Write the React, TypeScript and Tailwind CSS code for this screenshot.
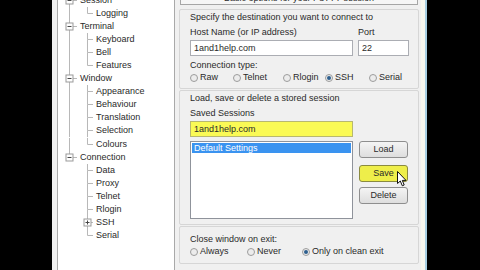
import React from "react";

type TreeRow = {
  label: string;
  level: 0 | 1;
  expander?: "-" | "+";
  rootTop?: boolean;
  rootBottom?: boolean;
  root?: boolean;
  childBottom?: boolean;
};

const TREE: TreeRow[] = [
  { label: "Session", level: 0, expander: "-", rootTop: true, rootBottom: true },
  { label: "Logging", level: 1, root: true },
  { label: "Terminal", level: 0, expander: "-", rootTop: true, rootBottom: true },
  { label: "Keyboard", level: 1, root: true, childBottom: true },
  { label: "Bell", level: 1, root: true, childBottom: true },
  { label: "Features", level: 1, root: true },
  { label: "Window", level: 0, expander: "-", rootTop: true, rootBottom: true },
  { label: "Appearance", level: 1, root: true, childBottom: true },
  { label: "Behaviour", level: 1, root: true, childBottom: true },
  { label: "Translation", level: 1, root: true, childBottom: true },
  { label: "Selection", level: 1, root: true, childBottom: true },
  { label: "Colours", level: 1, root: true },
  { label: "Connection", level: 0, expander: "-", rootTop: true },
  { label: "Data", level: 1, childBottom: true },
  { label: "Proxy", level: 1, childBottom: true },
  { label: "Telnet", level: 1, childBottom: true },
  { label: "Rlogin", level: 1, childBottom: true },
  { label: "SSH", level: 1, expander: "+", childBottom: true },
  { label: "Serial", level: 1 },
];

const LINE = "#b8b8b8";
const H = 13.1;
const MID = 6.5;

function ExpanderBox({ cx, sign }: { cx: number; sign: "-" | "+" }) {
  return (
    <g>
      <rect x={cx - 3.5} y={MID - 3.5} width="7" height="7" fill="#fff" stroke="#9a9a9a" strokeWidth="1" />
      <line x1={cx - 2} y1={MID} x2={cx + 2} y2={MID} stroke="#444" strokeWidth="1" />
      {sign === "+" && <line x1={cx} y1={MID - 2} x2={cx} y2={MID + 2} stroke="#444" strokeWidth="1" />}
    </g>
  );
}

function Connector({ row }: { row: TreeRow }) {
  const rx = 11.5;
  const cx = 29.5;
  if (row.level === 0) {
    return (
      <svg width="21" height={H} viewBox={`0 0 21 ${H}`} className="shrink-0">
        {row.rootTop && <line x1={rx} y1="0" x2={rx} y2={MID - 3.5} stroke={LINE} />}
        {row.rootBottom && <line x1={rx} y1={MID + 3.5} x2={rx} y2={H} stroke={LINE} />}
        <line x1={rx + 3.5} y1={MID} x2="19" y2={MID} stroke={LINE} />
        <ExpanderBox cx={rx} sign={row.expander ?? "-"} />
      </svg>
    );
  }
  return (
    <svg width="37" height={H} viewBox={`0 0 37 ${H}`} className="shrink-0">
      {row.root && <line x1={rx} y1="0" x2={rx} y2={H} stroke={LINE} />}
      <line x1={cx} y1="0" x2={cx} y2={row.expander ? MID - 3.5 : MID} stroke={LINE} />
      {row.childBottom && <line x1={cx} y1={row.expander ? MID + 3.5 : MID} x2={cx} y2={H} stroke={LINE} />}
      <line x1={row.expander ? cx + 3.5 : cx} y1={MID} x2="35" y2={MID} stroke={LINE} />
      {row.expander && <ExpanderBox cx={cx} sign={row.expander} />}
    </svg>
  );
}

function Radio({ checked }: { checked?: boolean }) {
  return (
    <span className="w-[8px] h-[8px] shrink-0 rounded-full border border-[#9c9c9c] bg-[#ececec] flex items-center justify-center">
      {checked && <span className="w-[4px] h-[4px] rounded-full bg-[#2d5f8e]" />}
    </span>
  );
}

function RadioItem({ label, checked, w }: { label: string; checked?: boolean; w?: string }) {
  return (
    <div className={`flex items-center gap-[2px] ${w ?? ""}`}>
      <Radio checked={checked} />
      <span>{label}</span>
    </div>
  );
}

function Button({ label, hot }: { label: string; hot?: boolean }) {
  return (
    <div
      className={`h-[17px] w-[49px] rounded-[3px] border flex items-center justify-center ${
        hot ? "border-[#8a8a40] bg-[#eeee4a]" : "border-[#8e8e8e] bg-gradient-to-b from-[#f4f4f4] to-[#dedede]"
      }`}
    >
      {label}
    </div>
  );
}

export default function App() {
  return (
    <div className="w-[480px] h-[270px] bg-black flex overflow-hidden font-['Liberation_Sans',Arial,sans-serif] text-[9px] leading-[11px] text-[#2a2a2a]">
      <div className="w-[52px] shrink-0" />

      {/* window body */}
      <div className="w-[369px] shrink-0 bg-[#f0f0f0] flex pl-[5px]">
        {/* category tree */}
        <div className="w-[118px] h-full shrink-0 bg-white border-x border-[#a9a9a9] overflow-hidden">
          <div className="-mt-[6.5px] flex flex-col">
            {TREE.map((row) => (
              <div key={row.label} className="h-[13.1px] flex items-center">
                <Connector row={row} />
                <span className="ml-[1px] whitespace-nowrap">{row.label}</span>
              </div>
            ))}
          </div>
        </div>

        {/* options panel */}
        <div className="w-[240px] shrink-0 ml-[4px] flex flex-col">
          <div className="-mt-[9px] h-[14px] mx-[1px] border border-[#a6a6a6] bg-[#f6f6f6] flex items-center justify-center">
            Basic options for your PuTTY session
          </div>

          {/* destination */}
          <div className="mt-[4px] border border-[#d6d6d6] rounded-[2px] pl-[10px] pb-[5px] flex flex-col">
            <div className="mt-[2px] h-[11px]">Specify the destination you want to connect to</div>
            <div className="mt-[4px] h-[11px] flex gap-[5px]">
              <span className="w-[163px]">Host Name (or IP address)</span>
              <span>Port</span>
            </div>
            <div className="mt-[2px] flex gap-[5px]">
              <div className="w-[163px] h-[16px] border border-[#abadb3] bg-white pl-[3px] flex items-center">
                1and1help.com
              </div>
              <div className="w-[51px] h-[16px] border border-[#abadb3] bg-white pl-[3px] flex items-center">22</div>
            </div>
            <div className="mt-[4px] h-[11px]">Connection type:</div>
            <div className="mt-[1px] h-[11px] flex items-center">
              <RadioItem label="Raw" w="w-[43px]" />
              <RadioItem label="Telnet" w="w-[50px]" />
              <RadioItem label="Rlogin" w="w-[42px]" />
              <RadioItem label="SSH" checked w="w-[44px]" />
              <RadioItem label="Serial" />
            </div>
          </div>

          {/* saved sessions */}
          <div className="mt-[1px] border border-[#d6d6d6] rounded-[2px] pl-[10px] pb-[5px] flex flex-col">
            <div className="mt-[2px] h-[11px]">Load, save or delete a stored session</div>
            <div className="mt-[4px] h-[11px]">Saved Sessions</div>
            <div className="mt-[2px] w-[163px] h-[16px] border border-[#b8b870] bg-[#fafa55] pl-[3px] flex items-center">
              1and1help.com
            </div>
            <div className="mt-[4px] flex gap-[6px]">
              <div className="w-[163px] h-[78px] border border-[#8f939b] bg-white p-[1px]">
                <div className="h-[10px] bg-[#3a93f0] text-white pl-[2px] flex items-center">Default Settings</div>
              </div>
              <div className="flex flex-col">
                <Button label="Load" />
                <div className="mt-[7px] relative">
                  <Button label="Save" hot />
                  <svg
                    width="11"
                    height="16"
                    viewBox="0 0 11 16"
                    className="absolute left-[38px] top-[6px]"
                  >
                    <path
                      d="M0.5 0.5 L0.5 12.5 L3.3 10 L5.3 14.8 L7.2 14 L5.3 9.4 L9 9.4 Z"
                      fill="#fff"
                      stroke="#111"
                      strokeWidth="1"
                      strokeLinejoin="round"
                    />
                  </svg>
                </div>
                <div className="mt-[5px]">
                  <Button label="Delete" />
                </div>
              </div>
            </div>
          </div>

          {/* close window */}
          <div className="mt-[1px] border border-[#d6d6d6] rounded-[2px] pl-[10px] pb-[6px] flex flex-col">
            <div className="mt-[7px] h-[11px]">Close window on exit:</div>
            <div className="mt-[1px] h-[11px] flex items-center">
              <RadioItem label="Always" w="w-[57px]" />
              <RadioItem label="Never" w="w-[55px]" />
              <RadioItem label="Only on clean exit" checked />
            </div>
          </div>
        </div>
      </div>

      {/* window edge */}
      <div className="w-[4px] shrink-0 bg-[#f7f7ef]" />
      <div className="w-[2px] shrink-0 bg-[#a8cfe2]" />
    </div>
  );
}
